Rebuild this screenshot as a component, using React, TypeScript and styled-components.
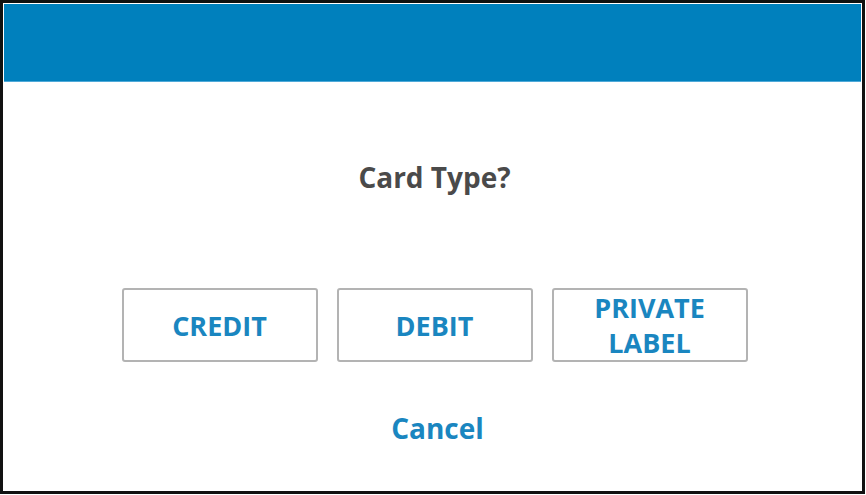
import React from 'react';
import styled, { createGlobalStyle } from 'styled-components';

const GlobalStyle = createGlobalStyle`
  html, body {
    margin: 0;
    padding: 0;
    background: #ffffff;
  }
  body {
    font-family: 'Open Sans', 'Noto Sans', sans-serif;
  }
`;

const Frame = styled.div`
  box-sizing: border-box;
  width: 865px;
  height: 494px;
  border: 3px solid #111111;
  padding: 1px;
  display: flex;
  flex-direction: column;
  background: #ffffff;
`;

const Header = styled.div`
  height: 77px;
  background: #0080bd;
  border-bottom: 1px solid #4fa9d8;
  flex-shrink: 0;
`;

const Body = styled.div`
  flex: 1;
  display: flex;
  flex-direction: column;
  align-items: center;
  padding-left: 4px;
`;

const Title = styled.div`
  margin-top: 77px;
  font-size: 28px;
  line-height: 36px;
  font-weight: 700;
  color: #4a4a4a;
`;

const ButtonRow = styled.div`
  display: flex;
  gap: 19px;
  margin-top: 93px;
`;

const ChoiceButton = styled.button`
  box-sizing: border-box;
  width: 196px;
  height: 74px;
  border: 2px solid #b3b3b3;
  border-radius: 3px;
  background: #ffffff;
  color: #1a86c0;
  font-family: 'Open Sans', 'Noto Sans', sans-serif;
  font-size: 27px;
  font-weight: 700;
  line-height: 35px;
  text-transform: uppercase;
  display: flex;
  align-items: center;
  justify-content: center;
  text-align: center;
  padding: 0 20px;
  cursor: pointer;
`;

const CancelLink = styled.button`
  margin: 48px 0 0 6px;
  border: none;
  background: none;
  padding: 0;
  color: #1a86c0;
  font-family: 'Open Sans', 'Noto Sans', sans-serif;
  font-size: 28px;
  font-weight: 700;
  line-height: 36px;
  cursor: pointer;
`;

const CARD_TYPES = ['Credit', 'Debit', 'Private Label'];

const App = () => {
  return (
    <>
      <GlobalStyle />
      <Frame>
        <Header />
        <Body>
          <Title>Card Type?</Title>
          <ButtonRow>
            {CARD_TYPES.map((type) => (
              <ChoiceButton key={type}>{type}</ChoiceButton>
            ))}
          </ButtonRow>
          <CancelLink>Cancel</CancelLink>
        </Body>
      </Frame>
    </>
  );
};

export default App;
